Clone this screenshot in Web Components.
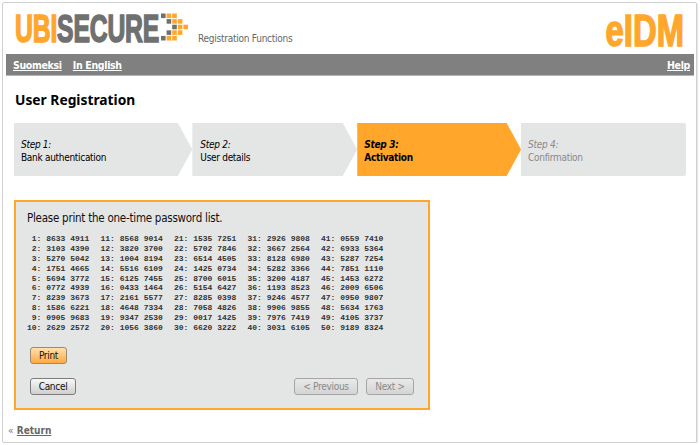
<!DOCTYPE html>
<html><head><meta charset="utf-8"><style>
html,body{margin:0;padding:0;background:#fff}
body{font:10px "DejaVu Sans Condensed","DejaVu Sans",sans-serif}
</style></head><body>
<template id="t-page"><style>
:host{display:block;width:695px;height:441px;box-sizing:border-box;margin:2px 0 0 2px;background:#fff;border:1px solid #d0d0d0;border-radius:2px;box-shadow:1px 1px 1px #e4e4e4;font-family:"DejaVu Sans Condensed","DejaVu Sans",sans-serif;font-size:10px;letter-spacing:-.3px;color:#000;overflow:hidden}
</style><slot></slot></template>

<template id="t-header"><style>
:host{display:flex;height:51px;justify-content:space-between;padding:0 0 0 12px;letter-spacing:0}
.logo{display:flex;padding-top:9px;height:32px}
.w{font:700 39px/33px "Liberation Sans",sans-serif;display:inline-block;transform-origin:0 0;transform:scale(.635,1);-webkit-text-stroke:1.6px currentColor;letter-spacing:-.3px;width:146px;height:32px;white-space:nowrap}
.o{color:#ffa62b}.g{color:#6f7070}
svg{display:block;flex:none}
.sub{font-size:10px;letter-spacing:-.25px;color:#666;margin:21px 0 0 7px;white-space:nowrap}
.e{font:700 41px/36px "Liberation Sans",sans-serif;color:#ffa62b;-webkit-text-stroke:1.4px #ffa62b;margin:9px 12px 0 0;white-space:nowrap;display:inline-block;height:36px;transform-origin:100% 0;transform:scale(.8,1.06)}
</style>
<div class="logo"><span class="w"><span class="o">UBI</span><span class="g">SECURE</span></span>
<svg width="30" height="32" viewBox="0 0 30 32"><g id="m"></g></svg>
<span class="sub">Registration Functions</span></div>
<div class="e">eIDM</div></template>

<template id="t-nav"><style>
:host{display:flex;justify-content:space-between;align-items:center;box-sizing:border-box;height:22px;margin:0 2px 0 3px;background:#808080;border-bottom:1px solid #b5b5b5;padding:0 4px 0 7px;font-weight:700;font-size:10.5px;letter-spacing:-.33px}
::slotted(a){color:#fff;text-decoration:underline;margin-right:11px}
::slotted(a:last-child){margin-right:0}
div{display:flex}
</style><div><slot name="l"></slot></div><div><slot name="r"></slot></div></template>

<template id="t-steps"><style>
:host{display:flex;margin:0 0 0 11px;width:672px;height:53px}
</style><slot></slot></template>

<template id="t-step"><style>
:host{display:block;box-sizing:border-box;height:53px;padding:15px 8px 0 7px;background:#e4e5e5;color:#000;line-height:13px;clip-path:polygon(0 0,calc(100% - 14.5px) 0,100% 50%,calc(100% - 14.5px) 100%,0 100%);white-space:nowrap}
:host([last]){clip-path:none;border-radius:0 2px 2px 0}
:host([active]){background:#ffa62b;font-weight:700}
:host([off]){color:#8a8a8a}
i{display:block}
</style><i><slot name="n"></slot></i><slot></slot></template>

<template id="t-panel"><style>
:host{display:block;box-sizing:border-box;width:416px;height:210px;margin:24px 0 0 11px;background:#e4e5e5;border:2px solid #ffa62b;padding:9px 14px 0 11px}
p{margin:0;font-size:11.5px;letter-spacing:-.25px;line-height:14px;color:#111}
</style><p><slot name="h"></slot></p><slot></slot></template>

<template id="t-otp"><style>
:host{display:grid;grid-template-columns:repeat(5,73.5px);margin:9px 0 0 0;font:700 8px/9.87px "Liberation Mono",monospace;letter-spacing:0;color:#333}
pre{margin:0;font:inherit;white-space:pre}
</style><div id="g" style="display:contents"></div></template>

<template id="t-btn"><style>
:host{display:inline-block;box-sizing:border-box;height:17px;padding:0 4px;border:1px solid #7c7c7c;border-radius:3px;background:linear-gradient(#f8f8f8,#cfcfcf);line-height:15px;text-align:center;color:#111;white-space:nowrap}
:host([primary]){background:linear-gradient(#ffe0ae,#ffa940);border-color:#9b8a70}
:host([disabled]){color:#8a8a8a;border-color:#a5a5a5;background:linear-gradient(#e9e9e9,#d4d4d4)}
</style><slot></slot></template>

<template id="t-row"><style>
:host{display:flex;margin-left:3px;justify-content:space-between}
div{display:flex;gap:8px}
</style><div><slot name="l"></slot></div><div><slot name="r"></slot></div></template>

<template id="t-foot"><style>
:host{display:block;margin:15px 0 0 5px;color:#777;word-spacing:1px}
::slotted(a){color:#666;font-weight:700;text-decoration:underline;letter-spacing:0}
</style><slot></slot></template>

<ub-page>
 <ub-header></ub-header>
 <ub-nav><a slot="l">Suomeksi</a><a slot="l">In English</a><a slot="r">Help</a></ub-nav>
 <ub-title>User Registration</ub-title>
 <ub-steps>
  <ub-step style="width:178.5px"><span slot="n">Step 1:</span>Bank authentication</ub-step>
  <ub-step style="width:165px;padding-left:8px"><span slot="n">Step 2:</span>User details</ub-step>
  <ub-step active style="width:164px"><span slot="n">Step 3:</span>Activation</ub-step>
  <ub-step off last style="width:165px"><span slot="n">Step 4:</span>Confirmation</ub-step>
 </ub-steps>
 <ub-panel>
  <span slot="h">Please print the one-time password list.</span>
  <ub-otp></ub-otp>
  <ub-gap style="height:14px"></ub-gap>
  <ub-row><ub-btn primary slot="l" style="width:37px">Print</ub-btn></ub-row>
  <ub-gap style="height:14px"></ub-gap>
  <ub-row><ub-btn slot="l" style="width:46px">Cancel</ub-btn><ub-btn disabled slot="r" style="width:64px">&lt; Previous</ub-btn><ub-btn disabled slot="r" style="width:48px">Next &gt;</ub-btn></ub-row>
 </ub-panel>
 <ub-foot>« <a>Return</a></ub-foot>
</ub-page>
<script>
const css=(name,html,extra)=>customElements.define(name,class extends HTMLElement{constructor(){super();const r=this.attachShadow({mode:"open"});r.innerHTML=html;extra&&extra(r)}});
const tpl=id=>document.getElementById(id).innerHTML;
const sq=[[0,0,'g'],[1,0,'o'],[2,0,'o'],[1,1,'g'],[2,1,'o'],[3,1,'o'],[2,2,'g'],[3,2,'o'],[4,2,'o'],[1,3,'g'],[2,3,'o'],[3,3,'o'],[0,4,'g'],[1,4,'o'],[2,4,'o']];
css("ub-page",tpl("t-page"));
css("ub-header",tpl("t-header"),r=>{const g=r.getElementById("m");g.innerHTML=sq.map(([c,d,k])=>`<rect x="${c*5.6}" y="${1.5+d*5.6}" width="4.6" height="4.6" fill="${k=='o'?'#ffa62b':'#6f7070'}"/>`).join("")});
css("ub-nav",tpl("t-nav"));
css("ub-title",`<style>:host{display:block;margin:15px 0 14px 12px;font:700 13.8px/18px "Noto Sans","DejaVu Sans",sans-serif;letter-spacing:0;color:#000}</style><slot></slot>`);
css("ub-steps",tpl("t-steps"));
css("ub-step",tpl("t-step"));
css("ub-panel",tpl("t-panel"));
const D=`8633 4911|3103 4390|5270 5042|1751 4665|5694 3772|0772 4939|8239 3673|1586 6221|0905 9683|2629 2572|8568 9014|3820 3700|1004 8194|5516 6109|6125 7455|0433 1464|2161 5577|4648 7334|9347 2530|1056 3860|1535 7251|5702 7846|6514 4505|1425 0734|8700 6015|5154 6427|8285 0398|7058 4826|0017 1425|6620 3222|2926 9808|3667 2564|8128 6980|5282 3366|3200 4187|1193 8523|9246 4577|9906 9855|7976 7419|3031 6105|0559 7410|6933 5364|5287 7254|7851 1110|1453 6272|2009 6506|0950 9807|5634 1763|4105 3737|9189 8324`.split("|");
css("ub-otp",tpl("t-otp"),r=>{let h="";for(let c=0;c<5;c++){let s="";for(let i=0;i<10;i++){const n=c*10+i+1;s+=String(n).padStart(2," ")+": "+D[n-1]+"\n"}h+=`<pre>${s}</pre>`}r.getElementById("g").innerHTML=h});
css("ub-gap",`<style>:host{display:block}</style>`);
css("ub-btn",tpl("t-btn"));
css("ub-row",tpl("t-row"));
css("ub-foot",tpl("t-foot"));
</script>
</body></html>
